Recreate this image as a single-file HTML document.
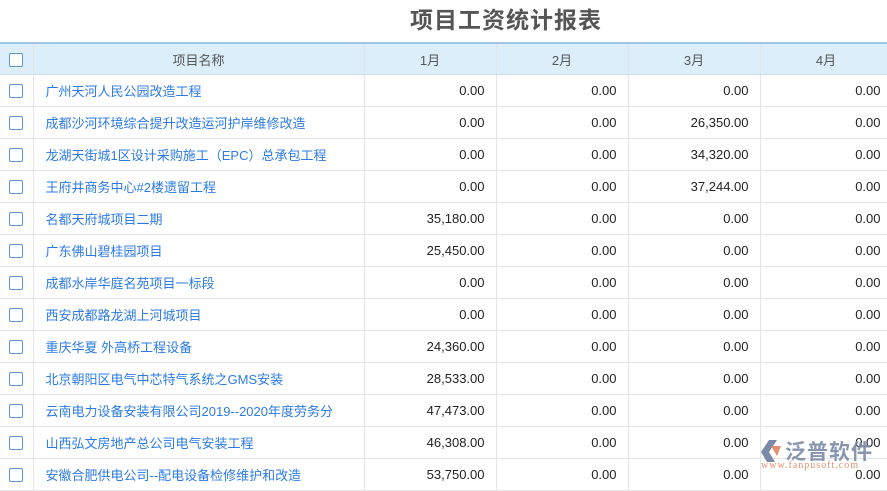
<!DOCTYPE html><html><head><meta charset="utf-8"><style>
body{margin:0;width:887px;height:483px;overflow:hidden;background:#fff;font-family:"Liberation Sans","Noto Sans CJK SC",sans-serif;font-size:13px;}
.t{position:absolute;left:0;width:1012px;top:1px;text-align:center;font-size:23px;font-weight:bold;color:#555;letter-spacing:1px;}
table{position:absolute;left:0;top:42px;border-collapse:collapse;table-layout:fixed;width:892px;}
td,th{height:31px;border-right:1px solid #e4e4e4;border-bottom:1px solid #e4e4e4;padding:0 11px;white-space:nowrap;overflow:hidden;}
th{background:#ddeefb;font-weight:normal;color:#555;border-top:2px solid #9cc7ea;border-bottom:1px solid #c8dcee;height:30px;}
td{color:#222;text-align:right;}
td.n{text-align:left;color:#2c7be5;padding-left:12px;box-shadow:3px 0 4px -2px rgba(0,0,0,.15);}
th.n{box-shadow:3px 0 4px -2px rgba(0,0,0,.15);}
td.c,th.c{padding:0;text-align:center;}
.cb{display:inline-block;width:12px;height:12px;border:1.5px solid #5a9ad6;border-radius:2px;vertical-align:middle;background:#fff;}
.logo{position:absolute;left:757px;top:438px;white-space:nowrap;}
</style></head><body>
<div class="t">项目工资统计报表</div>
<table>
<colgroup><col style="width:33px"><col style="width:331px"><col style="width:132px"><col style="width:132px"><col style="width:132px"><col style="width:132px"></colgroup>
<tr><th class="c"><span class="cb"></span></th><th class="n">项目名称</th><th>1月</th><th>2月</th><th>3月</th><th>4月</th></tr>
<tr><td class="c"><span class="cb"></span></td><td class="n">广州天河人民公园改造工程</td><td>0.00</td><td>0.00</td><td>0.00</td><td>0.00</td></tr>
<tr><td class="c"><span class="cb"></span></td><td class="n">成都沙河环境综合提升改造运河护岸维修改造</td><td>0.00</td><td>0.00</td><td>26,350.00</td><td>0.00</td></tr>
<tr><td class="c"><span class="cb"></span></td><td class="n">龙湖天街城1区设计采购施工（EPC）总承包工程</td><td>0.00</td><td>0.00</td><td>34,320.00</td><td>0.00</td></tr>
<tr><td class="c"><span class="cb"></span></td><td class="n">王府井商务中心#2楼遗留工程</td><td>0.00</td><td>0.00</td><td>37,244.00</td><td>0.00</td></tr>
<tr><td class="c"><span class="cb"></span></td><td class="n">名都天府城项目二期</td><td>35,180.00</td><td>0.00</td><td>0.00</td><td>0.00</td></tr>
<tr><td class="c"><span class="cb"></span></td><td class="n">广东佛山碧桂园项目</td><td>25,450.00</td><td>0.00</td><td>0.00</td><td>0.00</td></tr>
<tr><td class="c"><span class="cb"></span></td><td class="n">成都水岸华庭名苑项目一标段</td><td>0.00</td><td>0.00</td><td>0.00</td><td>0.00</td></tr>
<tr><td class="c"><span class="cb"></span></td><td class="n">西安成都路龙湖上河城项目</td><td>0.00</td><td>0.00</td><td>0.00</td><td>0.00</td></tr>
<tr><td class="c"><span class="cb"></span></td><td class="n">重庆华夏 外高桥工程设备</td><td>24,360.00</td><td>0.00</td><td>0.00</td><td>0.00</td></tr>
<tr><td class="c"><span class="cb"></span></td><td class="n">北京朝阳区电气中芯特气系统之GMS安装</td><td>28,533.00</td><td>0.00</td><td>0.00</td><td>0.00</td></tr>
<tr><td class="c"><span class="cb"></span></td><td class="n">云南电力设备安装有限公司2019--2020年度劳务分</td><td>47,473.00</td><td>0.00</td><td>0.00</td><td>0.00</td></tr>
<tr><td class="c"><span class="cb"></span></td><td class="n">山西弘文房地产总公司电气安装工程</td><td>46,308.00</td><td>0.00</td><td>0.00</td><td>0.00</td></tr>
<tr><td class="c"><span class="cb"></span></td><td class="n">安徽合肥供电公司--配电设备检修维护和改造</td><td>53,750.00</td><td>0.00</td><td>0.00</td><td>0.00</td></tr>
</table>
<div class="logo">
<svg width="26" height="26" style="position:absolute;left:0;top:0"><path d="M4 14 L12 2 L20 2 L12 14 L18 24 L10 24 Z" fill="#7b8aa6"/><path d="M14 8 L24 8 L20 18 Z" fill="#e09070"/></svg>
<div style="position:absolute;left:28px;top:-2px;font-size:21px;color:#7b8aa6;font-weight:bold;letter-spacing:1px;opacity:.9;white-space:nowrap">泛普软件</div>
<div style="position:absolute;left:4px;top:22px;font-size:10px;color:#e09070;font-family:'Liberation Serif',serif;letter-spacing:1px;white-space:nowrap">www.fanpusoft.com</div>
</div>
</body></html>
